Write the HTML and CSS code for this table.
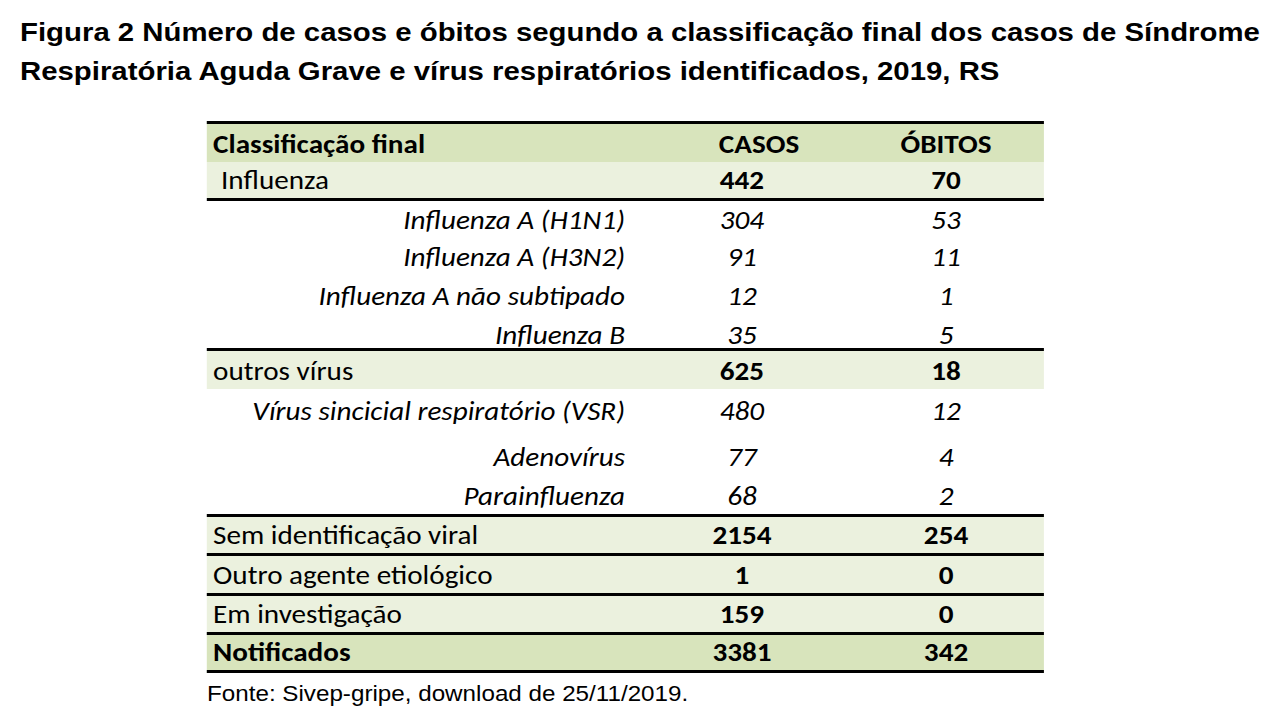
FILE: index.html
```html
<!DOCTYPE html>
<html lang="pt">
<head>
<meta charset="utf-8">
<link rel="stylesheet" href="styles.css">
</head>
<body>
<div class="page">
<h1 class="title">Figura 2 Número de casos e óbitos segundo a classificação final dos casos de Síndrome<br>Respiratória Aguda Grave e vírus respiratórios identificados, 2019, RS</h1>
<div class="tbl">
  <div class="row r-head bt dark bold"><div class="c1">Classificação final</div><div class="c2 hcasos">CASOS</div><div class="c3">ÓBITOS</div></div>
  <div class="row r-infl light bold"><div class="c1 indent normal">Influenza</div><div class="c2">442</div><div class="c3">70</div></div>
  <div class="row r-h1 bt sub"><div class="c1">Influenza A (H1N1)</div><div class="c2">304</div><div class="c3">53</div></div>
  <div class="row r-h3 sub"><div class="c1">Influenza A (H3N2)</div><div class="c2">91</div><div class="c3">11</div></div>
  <div class="row r-ns sub"><div class="c1">Influenza A não subtipado</div><div class="c2">12</div><div class="c3">1</div></div>
  <div class="row r-b sub"><div class="c1">Influenza B</div><div class="c2">35</div><div class="c3">5</div></div>
  <div class="row r-out bt light bold"><div class="c1 normal">outros vírus</div><div class="c2">625</div><div class="c3">18</div></div>
  <div class="row r-vsr sub"><div class="c1">Vírus sincicial respiratório (VSR)</div><div class="c2">480</div><div class="c3">12</div></div>
  <div class="row r-ade sub"><div class="c1">Adenovírus</div><div class="c2">77</div><div class="c3">4</div></div>
  <div class="row r-par sub"><div class="c1">Parainfluenza</div><div class="c2">68</div><div class="c3">2</div></div>
  <div class="row r-sem bt light bold"><div class="c1 normal">Sem identificação viral</div><div class="c2">2154</div><div class="c3">254</div></div>
  <div class="row r-oae bt light bold"><div class="c1 normal">Outro agente etiológico</div><div class="c2">1</div><div class="c3">0</div></div>
  <div class="row r-inv bt light bold"><div class="c1 normal">Em investigação</div><div class="c2">159</div><div class="c3">0</div></div>
  <div class="row r-not bt bb dark bold"><div class="c1">Notificados</div><div class="c2">3381</div><div class="c3">342</div></div>
</div>
<p class="fonte">Fonte: Sivep-gripe, download de 25/11/2019.</p>
</div>
</body>
</html>
```

FILE: styles.css
```css
html, body {
  margin: 0;
  padding: 0;
  background: #ffffff;
  color: #000000;
}
body {
  width: 1284px;
  height: 720px;
  overflow: hidden;
}
/* the whole figure is drawn slightly wide, as in the source image */
.page {
  width: 1168px;
  transform: scaleX(1.1);
  transform-origin: 0 0;
}
.title {
  margin: 0;
  padding: 13px 0 0 18.2px;
  font-family: "Liberation Sans", Arial, sans-serif;
  font-weight: bold;
  font-size: 26.7px;
  line-height: 39px;
  white-space: nowrap;
}
.tbl {
  margin: 30px 0 0 188.2px;
  width: 761px;
  font-family: Carlito, Lato, sans-serif;
  font-size: 26.5px;
}
.row {
  display: grid;
  grid-template-columns: 390px 192.7px 178.3px;
  align-items: end;
  box-sizing: border-box;
  line-height: 20px;
  padding-bottom: 8.5px;
}
.bt { border-top: 3px solid #000; }
.bb { border-bottom: 3px solid #000; }
.dark { background: #d8e4bc; }
.light { background: #ebf1de; }
.bold { font-weight: bold; }
.normal { font-weight: normal; }
.sub { font-style: italic; }
.c1 { padding-left: 5.5px; white-space: nowrap; }
.indent { padding-left: 12.7px; }
.sub .c1 { text-align: right; padding-right: 10px; padding-left: 0; }
.c2, .c3 { text-align: center; }
.hcasos { padding-left: 31px; }
.r-head { height: 41px; }
.r-infl { height: 36px; }
.r-h1 { height: 40px; }
.r-h3 { height: 37px; }
.r-ns { height: 39px; }
.r-b { height: 34px; padding-bottom: 3px; }
.r-out { height: 41px; }
.r-vsr { height: 40px; }
.r-ade { height: 46px; }
.r-par { height: 39px; }
.r-sem { height: 39px; }
.r-oae { height: 40px; }
.r-inv { height: 39px; }
.r-not { height: 41px; }
.fonte {
  margin: 10px 0 0 188.2px;
  font-family: "Liberation Sans", Arial, sans-serif;
  font-size: 22px;
  line-height: 22px;
}
```
